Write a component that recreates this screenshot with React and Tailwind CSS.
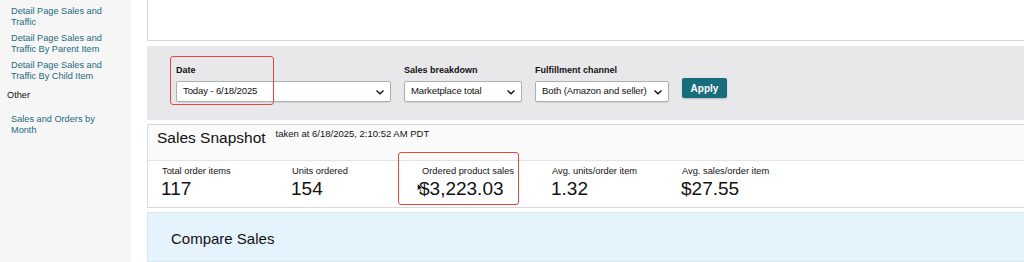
import React from "react";

const font = { fontFamily: '"Liberation Sans", Arial, sans-serif' };

const sideLinks = [
  ["Detail Page Sales and", "Traffic"],
  ["Detail Page Sales and", "Traffic By Parent Item"],
  ["Detail Page Sales and", "Traffic By Child Item"],
];

const metrics = [
  { label: "Total order items", value: "117" },
  { label: "Units ordered", value: "154" },
  { label: "Ordered product sales", value: "$3,223.03", marked: true },
  { label: "Avg. units/order item", value: "1.32" },
  { label: "Avg. sales/order item", value: "$27.55" },
];

const Chevron = () => (
  <svg width="10" height="10" viewBox="0 0 10 10" className="shrink-0">
    <path d="M1.5 3.5 L5 6.8 L8.5 3.5" fill="none" stroke="#111" strokeWidth="1.4" />
  </svg>
);

const Select = ({ value, width }) => (
  <div
    className={`flex items-center justify-between h-[21px] pl-[6px] pr-[5px] bg-white border border-[#a9b2b3] rounded-[2px] shadow-[0_1px_1px_rgba(0,0,0,0.08)] text-[9.6px] tracking-[-0.15px] text-[#111] ${width}`}
  >
    <span className="whitespace-nowrap">{value}</span>
    <Chevron />
  </div>
);

const Field = ({ label, children }) => (
  <div className="flex flex-col">
    <div className="text-[9px] font-bold text-[#111] mb-[5px] leading-[12px]">{label}</div>
    {children}
  </div>
);

export default function App() {
  return (
    <div className="flex h-[262px] w-[1024px] overflow-hidden bg-white" style={font}>
      {/* sidebar */}
      <div className="w-[131px] shrink-0 bg-[#f6f6f6] pt-[6px]">
        {sideLinks.map((l, i) => (
          <div key={i} className="pl-[11px] mb-[5px] text-[9.2px] leading-[11px] text-[#1c6a80]">
            <div>{l[0]}</div>
            <div>{l[1]}</div>
          </div>
        ))}
        <div className="pl-[7px] mt-[8px] text-[9.2px] leading-[11px] text-[#111]">Other</div>
        <div className="pl-[11px] mt-[13px] text-[9.2px] leading-[11px] text-[#1c6a80]">
          <div>Sales and Orders by</div>
          <div>Month</div>
        </div>
      </div>

      {/* main */}
      <div className="flex flex-col ml-[16px] flex-1 mr-[-4px]">
        <div className="h-[41px] shrink-0 bg-white border-l border-b border-[#d5d5d5]" />

        <div className="relative h-[74px] shrink-0 mt-[5px] bg-[#e8e8eb] flex items-start pt-[18px] pl-[29px] gap-[13px]">
          <Field label="Date">
            <Select value="Today - 6/18/2025" width="w-[215px]" />
          </Field>
          <Field label="Sales breakdown">
            <Select value="Marketplace total" width="w-[118px]" />
          </Field>
          <Field label="Fulfillment channel">
            <Select value="Both (Amazon and seller)" width="w-[134px]" />
          </Field>
          <button className="mt-[14px] h-[20px] w-[45px] bg-[#186d7d] text-white text-[10px] font-bold rounded-[2px] shadow-[0_1px_2px_rgba(0,0,0,0.2)]">
            Apply
          </button>
          <div className="absolute left-[24px] top-[11px] w-[102px] h-[47px] rounded-[2px] outline outline-[1.5px] outline-[#e8453c]" />
        </div>

        <div className="mt-[4px] h-[84px] shrink-0 border border-r-0 border-[#d8d8d8] flex flex-col">
          <div className="h-[36px] bg-[#fafafa] border-b border-[#e3e3e3] flex items-start pt-[1px] pl-[9px]">
            <span className="text-[15.5px] leading-[24px] text-[#111]">Sales Snapshot</span>
            <span className="ml-[10px] text-[9.5px] leading-[16px] text-[#111]">taken at 6/18/2025, 2:10:52 AM PDT</span>
          </div>
          <div className="relative flex bg-white pl-[13px] pt-[4px] flex-1">
            {metrics.map((m) => (
              <div key={m.label} className="w-[130px] shrink-0">
                <div className="text-[9.3px] leading-[12px] text-[#111] pl-[1px]">{m.label}</div>
                <div className={`text-[19px] leading-[24px] text-[#111] ${m.marked ? "-ml-[2px]" : ""}`}>
                  {m.value}
                </div>
              </div>
            ))}
            <svg className="absolute left-[269px] top-[22px]" width="6" height="9" viewBox="0 0 6 9">
              <path d="M0.5 0.5 L0.5 7.5 L2.2 6 L3.4 8.5 L4.4 8 L3.3 5.6 L5.5 5.5 Z" fill="#111" stroke="#fff" strokeWidth="0.5" />
            </svg>
            <div className="absolute left-[251px] top-[-8px] w-[119px] h-[51px] rounded-[2px] outline outline-[1.5px] outline-[#e8453c]" />
          </div>
        </div>

        <div className="mt-[4px] flex-1 bg-[#e5f4fc] border border-r-0 border-[#d6e6ee] pl-[23px] pt-[14px]">
          <span className="text-[15px] text-[#111]">Compare Sales</span>
        </div>
      </div>
    </div>
  );
}
